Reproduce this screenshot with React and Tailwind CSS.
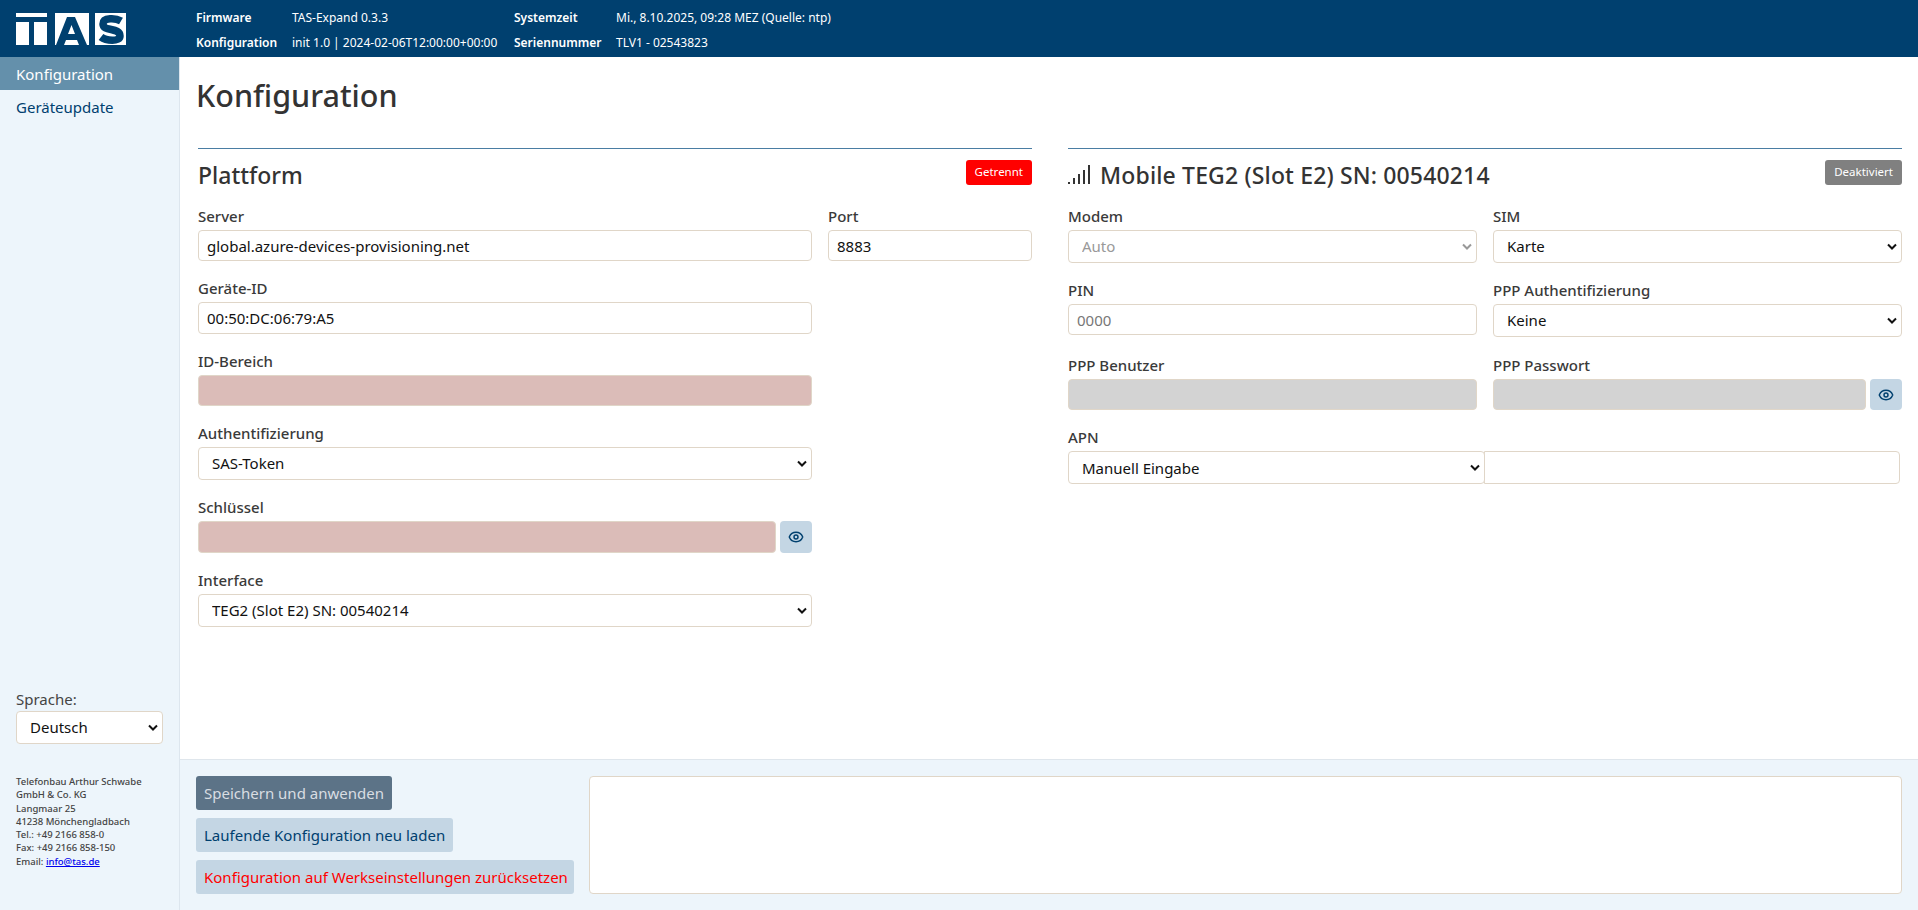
import React from 'react';
import { Eye } from 'lucide-react';

function Logo() {
  return (
    <svg width="111" height="32" viewBox="0 0 111 32" className="block">
      {/* T */}
      <rect x="0" y="0" width="31" height="4" fill="#fff" />
      <rect x="0" y="9" width="13" height="23" fill="#fff" />
      <rect x="18" y="9" width="13" height="23" fill="#fff" />
      {/* A */}
      <rect x="39" y="0" width="34" height="32" fill="#fff" />
      <path fillRule="evenodd" fill="#00406f" d="M51 4h8l12 28h-8l-2-5h-11l-2 5h-8zM55.500 12l-3.500 9h7z" />
      {/* S */}
      <rect x="79" y="0" width="31" height="32" fill="#fff" />
      <path fill="none" stroke="#00406f" strokeWidth="7.500" d="M105 8c-5-3-18-4-18 3 0 8 17 3 17 12 0 6-14 5-19 1" />
    </svg>
  );
}

function SignalIcon() {
  return (
    <svg width="22" height="20" viewBox="0 0 22 20" fill="#333" className="shrink-0">
      <rect x="0" y="17" width="2" height="2" />
      <rect x="5" y="13" width="2" height="6" />
      <rect x="10" y="9" width="2" height="10" />
      <rect x="15" y="5" width="2" height="14" />
      <rect x="20" y="0" width="2" height="19" />
    </svg>
  );
}

function Chevron({ muted }) {
  return (
    <svg width="10" height="7" viewBox="0 0 10 7" fill="none" className="absolute right-[5px] top-[13px] pointer-events-none">
      <path d="M1 1.500l4 4 4-4" stroke={muted ? '#999' : '#111'} strokeWidth="2" />
    </svg>
  );
}

function Select({ value, disabled, className = '' }) {
  return (
    <div className={`relative ${className}`}>
      <select
        disabled={disabled}
        defaultValue={value}
        className={`block w-full h-[33px] appearance-none bg-white border border-[#e0d6c8] rounded-[4px] pl-[13px] pr-5 text-[15px] outline-none ${
          disabled ? 'text-[#999]' : 'text-[#111]'
        }`}
      >
        <option>{value}</option>
      </select>
      <Chevron muted={disabled} />
    </div>
  );
}

function Input({ value, placeholder, tone, className = '' }) {
  const bg = tone === 'error' ? 'bg-[#dbbcb8]' : tone === 'off' ? 'bg-[#d3d3d3]' : 'bg-white';
  return (
    <input
      defaultValue={value}
      placeholder={placeholder}
      className={`block w-full h-[31.400px] ${bg} border border-[#e0d6c8] rounded-[4px] px-2 text-[15px] text-[#111] placeholder:text-[#777] outline-none ${className}`}
    />
  );
}

function EyeButton() {
  return (
    <button className="w-[32px] h-[31.400px] shrink-0 flex items-center justify-center bg-[#c4d6e4] rounded-[4px] text-[#00406f]">
      <Eye size={16} strokeWidth={2.2} />
    </button>
  );
}

function Field({ label, children, className = '' }) {
  return (
    <div className={`mb-[16px] ${className}`}>
      <label className="block h-[24px] mb-px text-[15px] leading-[23px] font-medium text-[#3a3a3a]">{label}</label>
      {children}
    </div>
  );
}

function SectionHead({ icon, title, titleClass = '', badge, badgeClass }) {
  return (
    <div className="border-t border-[#4a7da3] h-[57px] pt-[11px] flex justify-between">
      <h2 className={`flex items-center gap-[10px] h-[30px] text-[23px] leading-[30px] font-medium text-[#333] ${titleClass}`}>
        {icon}
        {title}
      </h2>
      <span className={`h-[25px] px-[9px] rounded-[3px] text-[11.500px] leading-[24px] text-white ${badgeClass}`}>{badge}</span>
    </div>
  );
}

export default function App() {
  return (
    <div className="h-screen flex flex-col overflow-hidden bg-white font-['Noto_Sans',sans-serif] text-[#333]">
      <header className="h-[57px] shrink-0 bg-[#00406f] text-white flex items-center">
        <div className="w-[196px] pl-4 shrink-0">
          <Logo />
        </div>
        <div className="grid grid-cols-[96px_222px_102px_auto] auto-rows-[25px] pt-[3px] items-center text-[12px]">
          <b className="font-semibold">Firmware</b>
          <span>TAS-Expand 0.3.3</span>
          <b className="font-semibold">Systemzeit</b>
          <span>Mi., 8.10.2025, 09:28 MEZ (Quelle: ntp)</span>
          <b className="font-semibold">Konfiguration</b>
          <span>init 1.0 | 2024-02-06T12:00:00+00:00</span>
          <b className="font-semibold">Seriennummer</b>
          <span>TLV1 - 02543823</span>
        </div>
      </header>

      <div className="flex-1 flex min-h-0">
        <aside className="w-[180px] shrink-0 bg-[#edf5fb] border-r border-[#dde6ee] flex flex-col">
          <nav className="text-[15px]">
            <a className="block h-[33px] pl-4 leading-[34px] bg-[#6490ab] text-white">Konfiguration</a>
            <a className="block h-[33px] mt-px pl-4 leading-[33px] text-[#00406f]">Geräteupdate</a>
          </nav>
          <div className="mt-auto px-4 pb-[42px]">
            <div className="text-[15px] leading-[24px] text-[#444]">Sprache:</div>
            <Select value="Deutsch" className="w-[147px]" />
            <div className="mt-[31px] text-[9.500px] leading-[13.300px] font-medium text-[#444]">
              <div>Telefonbau Arthur Schwabe</div>
              <div>GmbH &amp; Co. KG</div>
              <div>Langmaar 25</div>
              <div>41238 Mönchengladbach</div>
              <div>Tel.: +49 2166 858-0</div>
              <div>Fax: +49 2166 858-150</div>
              <div>
                Email: <a className="text-[#0000ee] underline">info@tas.de</a>
              </div>
            </div>
          </div>
        </aside>

        <main className="flex-1 min-w-0 flex flex-col">
          <div className="flex-1 min-h-0 pl-[18px] pr-4">
            <h1 className="h-[91px] pt-[16px] -ml-[2px] text-[30.500px] leading-[44px] font-medium text-[#333]">Konfiguration</h1>
            <div className="grid grid-cols-2 gap-[36px]">
              <section>
                <SectionHead title="Plattform" badge="Getrennt" badgeClass="bg-[#ff0000]" />
                <div className="grid grid-cols-[1fr_204px] gap-x-[16px]">
                  <Field label="Server">
                    <Input value="global.azure-devices-provisioning.net" />
                  </Field>
                  <Field label="Port">
                    <Input value="8883" />
                  </Field>
                </div>
                <div className="w-[614px]">
                  <Field label="Geräte-ID">
                    <Input value="00:50:DC:06:79:A5" />
                  </Field>
                  <Field label="ID-Bereich">
                    <Input tone="error" />
                  </Field>
                  <Field label="Authentifizierung">
                    <Select value="SAS-Token" />
                  </Field>
                  <Field label="Schlüssel">
                    <div className="flex gap-1">
                      <Input tone="error" />
                      <EyeButton />
                    </div>
                  </Field>
                  <Field label="Interface">
                    <Select value="TEG2 (Slot E2) SN: 00540214" />
                  </Field>
                </div>
              </section>

              <section>
                <SectionHead
                  icon={<SignalIcon />}
                  title="Mobile TEG2 (Slot E2) SN: 00540214"
                  titleClass="tracking-[0.15px]"
                  badge="Deaktiviert"
                  badgeClass="bg-[#808080]"
                />
                <div className="grid grid-cols-2 gap-x-[16px]">
                  <Field label="Modem">
                    <Select value="Auto" disabled />
                  </Field>
                  <Field label="SIM">
                    <Select value="Karte" />
                  </Field>
                  <Field label="PIN">
                    <Input placeholder="0000" />
                  </Field>
                  <Field label="PPP Authentifizierung" className="pb-px">
                    <Select value="Keine" />
                  </Field>
                  <Field label="PPP Benutzer">
                    <Input tone="off" />
                  </Field>
                  <Field label="PPP Passwort">
                    <div className="flex gap-1">
                      <Input tone="off" />
                      <EyeButton />
                    </div>
                  </Field>
                </div>
                <Field label="APN">
                  <div className="flex">
                    <Select value="Manuell Eingabe" className="w-[417px] shrink-0" />
                    <input className="flex-1 min-w-0 h-[33px] mr-[2px] -ml-px bg-white border border-[#e0d6c8] rounded-r-[4px] outline-none" />
                  </div>
                </Field>
              </section>
            </div>
          </div>

          <footer className="h-[151px] shrink-0 bg-[#edf5fb] border-t border-[#dfe6ec] pt-[16px] pb-[16px] px-4 flex gap-4">
            <div className="flex flex-col items-start gap-2 text-[15px] whitespace-nowrap shrink-0 w-[377px]">
              <button className="h-[34px] px-2 rounded-[3px] bg-[#5c7387] text-[#d8dde2]">Speichern und anwenden</button>
              <button className="h-[34px] px-2 rounded-[3px] bg-[#c4d6e4] text-[#00406f]">Laufende Konfiguration neu laden</button>
              <button className="h-[34px] pl-2 pr-[6px] rounded-[3px] bg-[#c4d6e4] text-[#ff0000]">Konfiguration auf Werkseinstellungen zurücksetzen</button>
            </div>
            <textarea className="flex-1 bg-white border border-[#e0d6c8] rounded-[4px] outline-none resize-none" />
          </footer>
        </main>
      </div>
    </div>
  );
}
